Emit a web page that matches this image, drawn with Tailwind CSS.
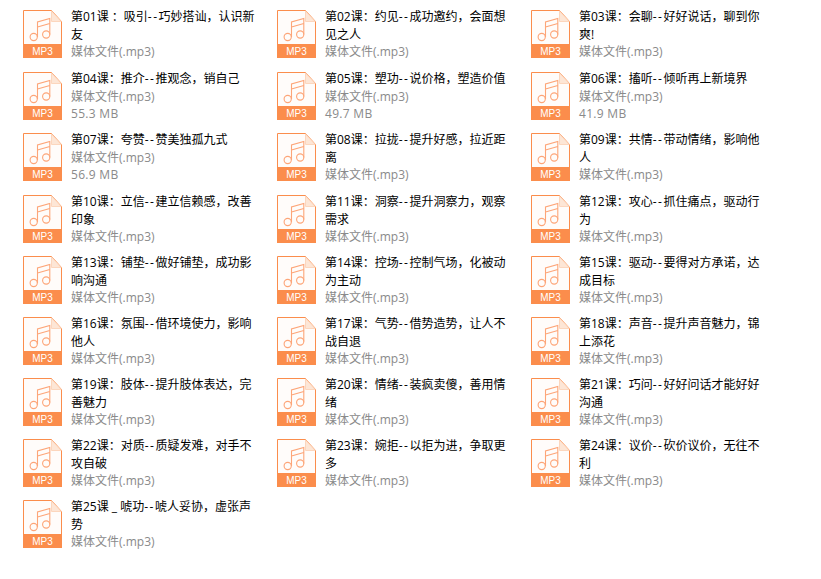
<!DOCTYPE html>
<html><head><meta charset="utf-8"><script src="https://cdn.jsdelivr.net/npm/@tailwindcss/browser@4"></script></head>
<body class="bg-white w-[821px] h-[579px] overflow-hidden">
<svg width="0" height="0" class="absolute"><defs><g id="f">
<path d="M.5.5H28.5L38.5 11.5V47.5H.5Z" fill="#fffcfa" stroke="#fb8d4c"/>
<path d="M28.5 1V11.5H38Z" fill="#fde6d6" stroke="#fcd6bd"/>
<rect y="34" width="39" height="14" fill="#fb8d4c"/>
<g fill="none" stroke="#fda578" stroke-width="1.1"><circle cx="10.7" cy="27" r="3.6"/><circle cx="23.2" cy="24.5" r="3.6"/><path d="M14.5 27V12L26.8 8.5V24.5M14.5 17L26.8 13.5"/></g>
<text x="19.5" y="45" text-anchor="middle" fill="#fff" font-size="11" font-family="Liberation Sans" textLength="20.5" lengthAdjust="spacingAndGlyphs">MP3</text>
</g></defs></svg>
<div class="grid grid-cols-[254px_254px_254px] grid-rows-[62px_61px_62px_61px_61px_61px_61px_61px_61px] pl-[23px] pt-[10px] font-['Open_Sans','Noto_Sans_CJK_SC',sans-serif] text-[12px] leading-[17.5px] text-black [&_svg]:shrink-0 [&_svg]:w-[39px] [&_svg]:h-[48px] [&>div]:flex [&>div]:gap-[9px] [&_p]:w-[188px] [&_p]:-mt-[2px] [&_span]:block [&_span]:text-[#8a8a8a] [&_b]:font-normal [&_b]:tracking-[1.5px] [&_span+span]:tracking-[.3px]">
<div><svg viewBox="0 0 39 48"><use href="#f"/></svg><p>第01课 ：吸引<b>--</b>巧妙搭讪，认识新友<span>媒体文件(.mp3)</span></p></div>
<div><svg viewBox="0 0 39 48"><use href="#f"/></svg><p>第02课：约见<b>--</b>成功邀约，会面想见之人<span>媒体文件(.mp3)</span></p></div>
<div><svg viewBox="0 0 39 48"><use href="#f"/></svg><p>第03课：会聊<b>--</b>好好说话，聊到你爽!<span>媒体文件(.mp3)</span></p></div>
<div><svg viewBox="0 0 39 48"><use href="#f"/></svg><p>第04课：推介<b>--</b>推观念，销自己<span>媒体文件(.mp3)</span><span>55.3 MB</span></p></div>
<div><svg viewBox="0 0 39 48"><use href="#f"/></svg><p>第05课：塑功<b>--</b>说价格，塑造价值<span>媒体文件(.mp3)</span><span>49.7 MB</span></p></div>
<div><svg viewBox="0 0 39 48"><use href="#f"/></svg><p>第06课：搐听<b>--</b>倾听再上新境界<span>媒体文件(.mp3)</span><span>41.9 MB</span></p></div>
<div><svg viewBox="0 0 39 48"><use href="#f"/></svg><p>第07课：夸赞<b>--</b>赞美独孤九式<span>媒体文件(.mp3)</span><span>56.9 MB</span></p></div>
<div><svg viewBox="0 0 39 48"><use href="#f"/></svg><p>第08课：拉拢<b>--</b>提升好感，拉近距离<span>媒体文件(.mp3)</span></p></div>
<div><svg viewBox="0 0 39 48"><use href="#f"/></svg><p>第09课：共情<b>--</b>带动情绪，影响他人<span>媒体文件(.mp3)</span></p></div>
<div><svg viewBox="0 0 39 48"><use href="#f"/></svg><p>第10课：立信<b>--</b>建立信赖感，改善印象<span>媒体文件(.mp3)</span></p></div>
<div><svg viewBox="0 0 39 48"><use href="#f"/></svg><p>第11课：洞察<b>--</b>提升洞察力，观察需求<span>媒体文件(.mp3)</span></p></div>
<div><svg viewBox="0 0 39 48"><use href="#f"/></svg><p>第12课：攻心<b>--</b>抓住痛点，驱动行为<span>媒体文件(.mp3)</span></p></div>
<div><svg viewBox="0 0 39 48"><use href="#f"/></svg><p>第13课：铺垫<b>--</b>做好铺垫，成功影响沟通<span>媒体文件(.mp3)</span></p></div>
<div><svg viewBox="0 0 39 48"><use href="#f"/></svg><p>第14课：控场<b>--</b>控制气场，化被动为主动<span>媒体文件(.mp3)</span></p></div>
<div><svg viewBox="0 0 39 48"><use href="#f"/></svg><p>第15课：驱动<b>--</b>要得对方承诺，达成目标<span>媒体文件(.mp3)</span></p></div>
<div><svg viewBox="0 0 39 48"><use href="#f"/></svg><p>第16课：氛围<b>--</b>借环境使力，影响他人<span>媒体文件(.mp3)</span></p></div>
<div><svg viewBox="0 0 39 48"><use href="#f"/></svg><p>第17课：气势<b>--</b>借势造势，让人不战自退<span>媒体文件(.mp3)</span></p></div>
<div><svg viewBox="0 0 39 48"><use href="#f"/></svg><p>第18课：声音<b>--</b>提升声音魅力，锦上添花<span>媒体文件(.mp3)</span></p></div>
<div><svg viewBox="0 0 39 48"><use href="#f"/></svg><p>第19课：肢体<b>--</b>提升肢体表达，完善魅力<span>媒体文件(.mp3)</span></p></div>
<div><svg viewBox="0 0 39 48"><use href="#f"/></svg><p>第20课：情绪<b>--</b>装疯卖傻，善用情绪<span>媒体文件(.mp3)</span></p></div>
<div><svg viewBox="0 0 39 48"><use href="#f"/></svg><p>第21课：巧问<b>--</b>好好问话才能好好沟通<span>媒体文件(.mp3)</span></p></div>
<div><svg viewBox="0 0 39 48"><use href="#f"/></svg><p>第22课：对质<b>--</b>质疑发难，对手不攻自破<span>媒体文件(.mp3)</span></p></div>
<div><svg viewBox="0 0 39 48"><use href="#f"/></svg><p>第23课：婉拒<b>--</b>以拒为进，争取更多<span>媒体文件(.mp3)</span></p></div>
<div><svg viewBox="0 0 39 48"><use href="#f"/></svg><p>第24课：议价<b>--</b>砍价议价，无往不利<span>媒体文件(.mp3)</span></p></div>
<div><svg viewBox="0 0 39 48"><use href="#f"/></svg><p>第25课 _ 唬功<b>--</b>唬人妥协，虚张声势<span>媒体文件(.mp3)</span></p></div>
</div>
</body></html>
